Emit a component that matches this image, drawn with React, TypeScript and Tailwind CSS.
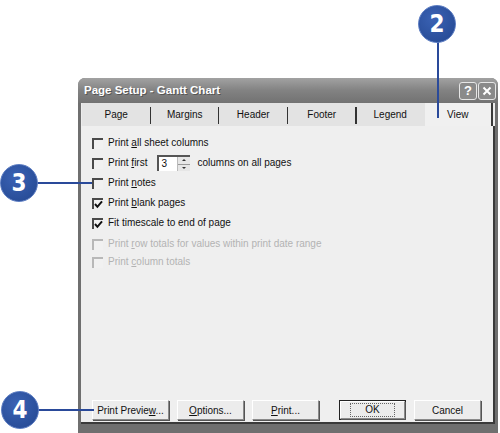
import React from "react";

const ui = { fontFamily: '"Liberation Sans", Arial, sans-serif' };

const tabs = ["Page", "Margins", "Header", "Footer", "Legend", "View"];

const Check = ({ checked, disabled }: { checked?: boolean; disabled?: boolean }) => (
  <span
    className={`relative w-[11px] h-[11px] shrink-0 border-t-2 border-l-2 ${
      disabled ? "border-[#b8b8b8]" : "border-[#4a4a4a]"
    } bg-[#f1f1f1]`}
  >
    {checked && (
      <svg viewBox="0 0 9 9" className="absolute left-[0px] top-[0px] w-[9px] h-[9px]">
        <path d="M1 4 L3.4 6.8 L8 1.4" fill="none" stroke="#111" strokeWidth="2" />
      </svg>
    )}
  </span>
);

const Row = ({
  children,
  checked,
  disabled,
  className = "h-[20px]",
}: {
  children: React.ReactNode;
  checked?: boolean;
  disabled?: boolean;
  className?: string;
}) => (
  <div className={`flex items-center gap-[5px] ${className} ${disabled ? "text-[#b3b3b3]" : "text-[#111]"}`}>
    <Check checked={checked} disabled={disabled} />
    <span className="leading-none">{children}</span>
  </div>
);

const Btn = ({ children, w, isDefault }: { children: React.ReactNode; w: string; isDefault?: boolean }) => (
  <div className={`${w} h-[20px] ${isDefault ? "border border-[#222]" : ""}`}>
    <div className="h-full w-full flex items-center justify-center bg-[#ececec] border border-t-white border-l-white border-r-[#8a8a8a] border-b-[#8a8a8a] shadow-[1px_1px_0_#555] text-[10px] text-[#111]">
      {children}
    </div>
  </div>
);

const Callout = ({ n, className }: { n: string; className: string }) => (
  <div
    className={`absolute w-[38px] h-[38px] rounded-full bg-[radial-gradient(circle_at_40%_35%,#3a62b4,#23468f)] border border-[#5b7cc2] flex items-center justify-center text-white font-bold text-[24px] ${className}`}
    style={{ fontFamily: '"Liberation Sans Narrow", "DejaVu Sans Condensed", "Liberation Sans", sans-serif' }}
  >
    {n}
  </div>
);

export default function App() {
  return (
    <div className="relative w-[500px] h-[433px] bg-white overflow-hidden" style={ui}>
      <div className="pt-[78px] pl-[78px]">
        {/* dialog */}
        <div className="w-[420px] h-[355px] flex flex-col rounded-t-[7px] overflow-hidden bg-[#6f6f6f]">
          {/* title bar */}
          <div className="h-[25px] shrink-0 flex items-center justify-between pl-[6px] pr-[2px] bg-gradient-to-b from-[#a2a2a2] via-[#828282] to-[#727272]">
            <span className="text-white font-bold text-[11.5px] [text-shadow:1px_1px_0_#555]">
              Page Setup - Gantt Chart
            </span>
            <div className="flex gap-[1px]">
              <div className="w-[18px] h-[18px] rounded-[3px] border border-[#e6e6e6] bg-[#8a8a8a] flex items-center justify-center text-white font-bold text-[13px]">
                ?
              </div>
              <div className="w-[18px] h-[18px] rounded-[3px] border border-[#e6e6e6] bg-[#8a8a8a] flex items-center justify-center">
                <svg viewBox="0 0 10 10" className="w-[10px] h-[10px]">
                  <path d="M1.5 1.5 L8.5 8.5 M8.5 1.5 L1.5 8.5" stroke="#fff" strokeWidth="2" />
                </svg>
              </div>
            </div>
          </div>

          {/* client area */}
          <div className="flex-1 mx-[3px] mb-[9px] flex flex-col bg-[#ececec]">
            {/* tabs */}
            <div className="grid grid-cols-6 h-[23px] shrink-0 ml-[1px] mr-[2px] text-[10px] text-[#111]">
              {tabs.map((t, i) => (
                <div
                  key={t}
                  className={`flex items-center justify-center ${
                    t === "View" ? "bg-[#f0f0f0] border-r-2 border-[#3a3a3a]" : "bg-[#e3e3e3]"
                  } ${i < 4 ? "relative" : ""}`}
                >
                  {t}
                  {i < 4 && <span className="absolute right-[-1px] top-[4px] h-[17px] w-[2px] bg-[#333]" />}
                </div>
              ))}
            </div>

            {/* panel */}
            <div className="flex-1 flex flex-col bg-[#efefef] border-r-2 border-b-2 border-[#3a3a3a] text-[10px]">
              <div className="flex flex-col pl-[11px] pt-[7px]">
                <Row>
                  Print <u>a</u>ll sheet columns
                </Row>
                <div className="flex items-center h-[20px] text-[#111]">
                  <Check />
                  <span className="ml-[5px] leading-none">
                    Print <u>f</u>irst
                  </span>
                  <div className="ml-[10px] flex h-[16px] w-[33px] border-t-2 border-l-2 border-[#555] bg-white">
                    <span className="flex-1 pl-[2px] leading-[14px]">3</span>
                    <div className="w-[13px] flex flex-col bg-[#e6e6e6] border-l border-[#bbb]">
                      <div className="flex-1 flex items-center justify-center border-b border-[#999]">
                        <span className="w-0 h-0 border-l-[2px] border-r-[2px] border-b-[2px] border-l-transparent border-r-transparent border-b-[#333]" />
                      </div>
                      <div className="flex-1 flex items-center justify-center">
                        <span className="w-0 h-0 border-l-[2px] border-r-[2px] border-t-[2px] border-l-transparent border-r-transparent border-t-[#333]" />
                      </div>
                    </div>
                  </div>
                  <span className="ml-[7px] leading-none">columns on all pages</span>
                </div>
                <Row>
                  Print <u>n</u>otes
                </Row>
                <Row checked>
                  Print <u>b</u>lank pages
                </Row>
                <Row checked>Fit timescale to end of page</Row>
                <Row disabled className="h-[18px] mt-[2px]">
                  Print <u>r</u>ow totals for values within print date range
                </Row>
                <Row disabled className="h-[18px]">
                  Print <u>c</u>olumn totals
                </Row>
              </div>

              <div className="flex-1" />

              {/* buttons */}
              <div className="flex items-center pl-[11px] pb-[2px]">
                <Btn w="w-[77px]">
                  <span>
                    Print Previe<u>w</u>...
                  </span>
                </Btn>
                <div className="w-[8px]" />
                <Btn w="w-[67px]">
                  <span>
                    <u>O</u>ptions...
                  </span>
                </Btn>
                <div className="w-[8px]" />
                <Btn w="w-[67px]">
                  <span>
                    <u>P</u>rint...
                  </span>
                </Btn>
                <div className="w-[20px]" />
                <Btn w="w-[67px]" isDefault>
                  <span className="px-[14px] border border-dotted border-[#666] leading-[12px]">OK</span>
                </Btn>
                <div className="w-[8px]" />
                <Btn w="w-[67px]">Cancel</Btn>
              </div>
            </div>
          </div>
        </div>
      </div>

      {/* callouts */}
      <div className="absolute left-[437px] top-[40px] w-[2px] h-[78px] bg-[#2a4a9a]" />
      <Callout n="2" className="left-[418px] top-[5px]" />
      <div className="absolute left-[36px] top-[182px] w-[56px] h-[2px] bg-[#2a4a9a]" />
      <Callout n="3" className="left-[0px] top-[164px]" />
      <div className="absolute left-[38px] top-[409px] w-[56px] h-[2px] bg-[#2a4a9a]" />
      <Callout n="4" className="left-[1px] top-[391px]" />
    </div>
  );
}
